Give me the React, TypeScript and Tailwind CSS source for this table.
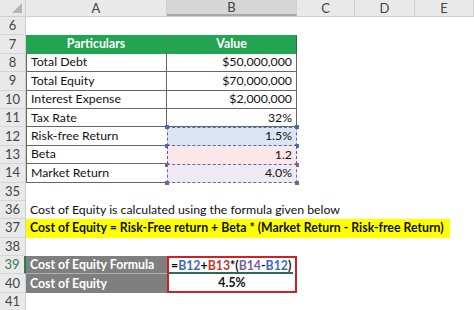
import type { ReactNode } from "react";

const COLS = ["w-[141px]", "w-[130px]", "w-[58px]", "w-[60px]", "w-[59px]"];

function RowNum({ n, active }: { n: number; active?: boolean }) {
    return (
        <div
            className={`w-[26px] shrink-0 h-full flex items-center justify-center text-[13px] bg-[#e9e9e9] border-b border-[#d4d4d4] ${
                active ? "text-[#2e7d4f] border-r-2 border-r-[#2e7d4f]" : "text-[#444] border-r border-r-[#cfcfcf]"
            }`}
        >
            {n}
        </div>
    );
}

function Row({ n, active, children }: { n: number; active?: boolean; children?: ReactNode }) {
    return (
        <div className="flex h-[18.4px] items-stretch">
            <RowNum n={n} active={active} />
            {children}
        </div>
    );
}

function Handle({ className }: { className: string }) {
    return <span className={`absolute w-[4px] h-[4px] ${className}`} />;
}

const data = [
    { n: 8, label: "Total Debt", value: "$50,000,000" },
    { n: 9, label: "Total Equity", value: "$70,000,000" },
    { n: 10, label: "Interest Expense", value: "$2,000,000" },
    { n: 11, label: "Tax Rate", value: "32%" },
];

export default function App() {
    return (
        <div
            className="w-[474px] h-[310px] overflow-hidden bg-white text-[12.3px] leading-none text-[#111]"
            style={{ fontFamily: "Lato, 'Open Sans', sans-serif" }}
        >
            {/* column headers */}
            <div className="flex h-[17px] bg-[#e9e9e9] text-[#444] text-[13px] border-b border-[#cfcfcf]">
                <div className="w-[26px] shrink-0 relative border-r border-[#cfcfcf]">
                    <span className="absolute right-[3px] bottom-[3px] w-0 h-0 border-l-[10px] border-l-transparent border-b-[10px] border-b-[#b5b5b5]" />
                </div>
                {["A", "B", "C", "D", "E"].map((c, i) => (
                    <div
                        key={c}
                        className={`${COLS[i]} shrink-0 flex items-center justify-center border-r border-[#d0d0d0] ${
                            c === "B" ? "bg-[#d6d6d6] border-b-2 border-b-[#a8a8a8]" : ""
                        }`}
                    >
                        {c}
                    </div>
                ))}
            </div>

            <Row n={6} />

            <Row n={7}>
                <div className={`${COLS[0]} shrink-0 bg-[#22a552] text-white font-bold flex items-center justify-center border-r border-[#4b8a5f]`}>
                    Particulars
                </div>
                <div className={`${COLS[1]} shrink-0 bg-[#22a552] text-white font-bold flex items-center justify-center border-r border-[#555]`}>
                    Value
                </div>
            </Row>

            {data.map((d) => (
                <Row key={d.n} n={d.n}>
                    <div className={`${COLS[0]} shrink-0 flex items-center pl-[4px] border-r border-l border-b border-[#666]`}>
                        {d.label}
                    </div>
                    <div className={`${COLS[1]} shrink-0 flex items-center justify-end pr-[4px] border-r border-b border-[#666]`}>
                        {d.value}
                    </div>
                </Row>
            ))}

            <Row n={12}>
                <div className={`${COLS[0]} shrink-0 flex items-center pl-[4px] border-l border-b border-[#666]`}>
                    Risk-free Return
                </div>
                <div className={`${COLS[1]} shrink-0 relative flex items-center justify-end pr-[4px] bg-[#dbe4f3] border border-dashed border-[#4a6fb0]`}>
                    1.5%
                    <Handle className="bg-[#4a6fb0] -left-[3px] -top-[3px]" />
                    <Handle className="bg-[#4a6fb0] -right-[3px] -top-[3px]" />
                    <Handle className="bg-[#4a6fb0] -left-[3px] -bottom-[3px]" />
                    <Handle className="bg-[#4a6fb0] -right-[3px] -bottom-[3px]" />
                </div>
            </Row>

            <Row n={13}>
                <div className={`${COLS[0]} shrink-0 flex items-center pl-[4px] border-l border-b border-[#666]`}>
                    Beta
                </div>
                <div className={`${COLS[1]} shrink-0 relative flex items-center justify-end pr-[4px] bg-[#fbe6ea] border-x border-dashed border-[#8a4a6a]`}>
                    1.2
                    <Handle className="bg-[#8a5a8a] -left-[3px] -bottom-[3px]" />
                    <Handle className="bg-[#8a5a8a] -right-[3px] -bottom-[3px]" />
                </div>
            </Row>

            <Row n={14}>
                <div className={`${COLS[0]} shrink-0 flex items-center pl-[4px] border-l border-b border-[#666]`}>
                    Market Return
                </div>
                <div className={`${COLS[1]} shrink-0 relative flex items-center justify-end pr-[4px] bg-[#eeeaf5] border-t border-x border-b border-dashed border-[#7a5ea3]`}>
                    4.0%
                    <Handle className="bg-[#7a5ea3] -left-[3px] -bottom-[3px]" />
                    <Handle className="bg-[#7a5ea3] -right-[3px] -bottom-[3px]" />
                </div>
            </Row>

            <Row n={35} />

            <Row n={36}>
                <div className="flex items-center pl-[4px] whitespace-nowrap">
                    Cost of Equity is calculated using the formula given below
                </div>
            </Row>

            <Row n={37}>
                <div className="flex items-center pl-[4px] pr-[6px] bg-[#ffff00] font-bold whitespace-nowrap">
                    Cost of Equity = Risk-Free return + Beta * (Market Return - Risk-free Return)
                </div>
            </Row>

            <Row n={38} />

            <Row n={39} active>
                <div className={`${COLS[0]} shrink-0 flex items-center pl-[4px] bg-[#7f7f7f] text-white font-bold border-b border-[#b0b0b0]`}>
                    Cost of Equity Formula
                </div>
                <div className={`${COLS[1]} shrink-0 flex items-center pl-[2px] font-bold border-t-2 border-x-2 border-[#d11f26] relative`}>
                    <span className="whitespace-nowrap">
                        =<span className="text-[#3b6ab8]">B12</span>+<span className="text-[#c0392b]">B13</span>*(
                        <span className="text-[#7a5ea3]">B14</span>-<span className="text-[#3b6ab8]">B12</span>)
                    </span>
                    <span className="absolute left-0 right-[2px] bottom-0 h-[2px] bg-[#2e6b4f]" />
                </div>
            </Row>

            <Row n={40}>
                <div className={`${COLS[0]} shrink-0 flex items-center pl-[4px] bg-[#7f7f7f] text-white font-bold`}>
                    Cost of Equity
                </div>
                <div className={`${COLS[1]} shrink-0 flex items-center justify-center font-bold border-b-2 border-x-2 border-[#d11f26]`}>
                    4.5%
                </div>
            </Row>

            <Row n={41} />
        </div>
    );
}
